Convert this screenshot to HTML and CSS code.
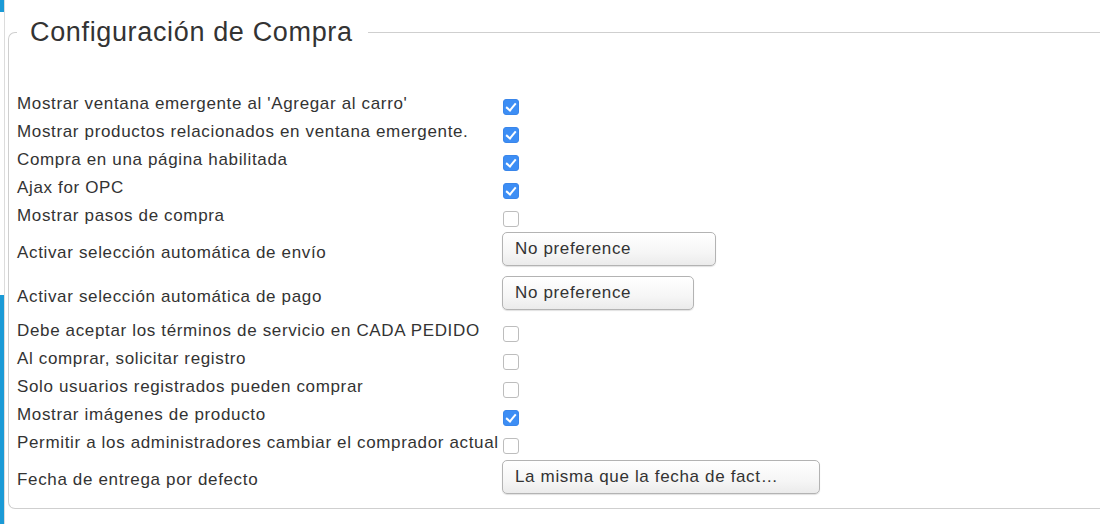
FILE: index.html
```html
<!DOCTYPE html>
<html lang="es">
<head>
<meta charset="utf-8">
<title>Configuración de Compra</title>
<link rel="stylesheet" href="styles.css">
</head>
<body>
<div class="page">
  <div class="rail"></div>
  <fieldset class="panel">
    <legend class="panel-title">Configuración de Compra</legend>
    <div class="rows">
      <div class="row"><span class="label">Mostrar ventana emergente al 'Agregar al carro'</span><span class="check on"></span></div>
      <div class="row"><span class="label">Mostrar productos relacionados en ventana emergente.</span><span class="check on"></span></div>
      <div class="row"><span class="label">Compra en una página habilitada</span><span class="check on"></span></div>
      <div class="row"><span class="label">Ajax for OPC</span><span class="check on"></span></div>
      <div class="row"><span class="label">Mostrar pasos de compra</span><span class="check"></span></div>
      <div class="row row-select"><span class="label">Activar selección automática de envío</span><span class="select w1">No preference</span></div>
      <div class="row row-select"><span class="label">Activar selección automática de pago</span><span class="select w2">No preference</span></div>
      <div class="row"><span class="label">Debe aceptar los términos de servicio en CADA PEDIDO</span><span class="check"></span></div>
      <div class="row"><span class="label">Al comprar, solicitar registro</span><span class="check"></span></div>
      <div class="row"><span class="label">Solo usuarios registrados pueden comprar</span><span class="check"></span></div>
      <div class="row"><span class="label">Mostrar imágenes de producto</span><span class="check on"></span></div>
      <div class="row"><span class="label">Permitir a los administradores cambiar el comprador actual</span><span class="check"></span></div>
      <div class="row row-select last"><span class="label">Fecha de entrega por defecto</span><span class="select w3">La misma que la fecha de fact…</span></div>
    </div>
  </fieldset>
</div>
</body>
</html>
```

FILE: styles.css
```css
html, body {
  margin: 0;
  padding: 0;
  background: #fff;
}
body {
  width: 1100px;
  height: 524px;
  overflow: hidden;
  font-family: "Liberation Sans", Arial, sans-serif;
  color: #333;
}
.page {
  display: flex;
  align-items: stretch;
  height: 524px;
}
.rail {
  width: 4px;
  flex: none;
  border-right: 1px solid #dcdcdc;
  background: linear-gradient(#1b9ad6 0, #1b9ad6 12px, #fff 12px, #fff 295px, #1b9ad6 295px);
}
.panel {
  margin: 17px 0 0 3px;
  padding: 0 0 10px 8px;
  border: 1px solid #cfcfcf;
  border-right: none;
  border-radius: 7px 0 0 7px;
  flex: 1;
  align-self: flex-start;
  min-width: 0;
}
.panel-title {
  font-size: 27px;
  line-height: 30px;
  letter-spacing: 0.65px;
  padding: 0 15px 0 13px;
  color: #333;
}
.rows {
  margin-top: 42px;
  display: flex;
  flex-direction: column;
}
.row {
  display: flex;
  align-items: flex-start;
  height: 28px;
}
.label {
  width: 485px;
  flex: none;
  font-size: 17px;
  letter-spacing: 0.65px;
  line-height: 29px;
  white-space: nowrap;
}
.check {
  box-sizing: border-box;
  width: 16px;
  height: 16px;
  margin-top: 10px;
  border: 1px solid #bdbdbd;
  border-radius: 3px;
  background: #fff;
  flex: none;
  position: relative;
}
.check.on {
  background: #3d8ef5;
  border-color: #3a86ea;
}
.check.on::after {
  content: "";
  position: absolute;
  left: 4px;
  top: 1px;
  width: 4px;
  height: 8px;
  border: solid #fff;
  border-width: 0 2px 2px 0;
  transform: rotate(40deg);
}
.label + .check {
  margin-left: 1px;
}
.row-select {
  height: 44px;
}
.row-select .label {
  padding-top: 9px;
}
.row-select + .row-select {
  height: 43px;
}
.row-select.last {
  height: 42px;
}
.row-select.last .select {
  margin-top: 4px;
}
.select {
  display: block;
  box-sizing: border-box;
  height: 34px;
  margin-top: 3px;
  padding-left: 12px;
  font-size: 17px;
  letter-spacing: 0.65px;
  line-height: 32px;
  color: #333;
  border: 1px solid #b3b3b3;
  border-radius: 5px;
  background: linear-gradient(#fff, #f6f6f6 60%, #ebebeb);
  box-shadow: 0 1px 1px rgba(0, 0, 0, 0.12);
  white-space: nowrap;
  flex: none;
}
.w1 { width: 214px; }
.w2 { width: 192px; }
.w3 { width: 318px; }
```
